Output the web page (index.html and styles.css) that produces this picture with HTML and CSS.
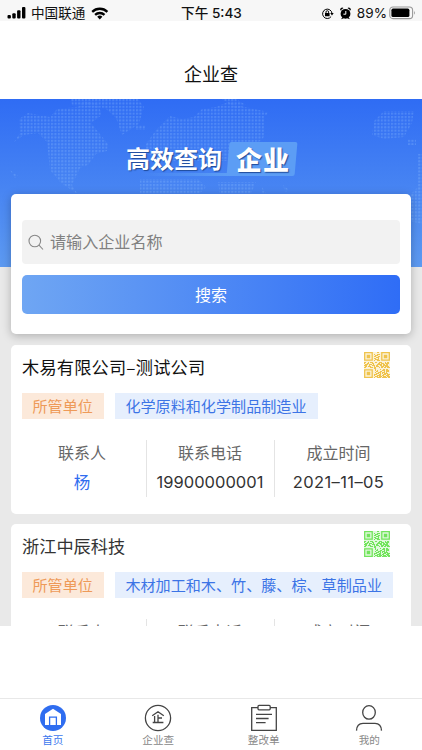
FILE: index.html
```
<!DOCTYPE html>
<html lang="zh-CN">
<head>
    <meta charset="UTF-8">
    <meta name="viewport" content="width=device-width, initial-scale=1">
    <title>企业查</title>
    <link rel="stylesheet" href="styles.css">
</head>
<body>
    <!-- 二维码图形，列表共用 -->
    <svg class="defs" width="0" height="0">
        <symbol id="qr" viewBox="0 0 26 26">
            <path fill="currentColor" opacity=".22" d="M0 0h26v26H0z"/>
            <path fill="none" stroke="currentColor" stroke-width="1.3" d="M.7 .7h7.5v7.5H.7zM17.8 .7h7.5v7.5h-7.5zM.7 17.8h7.5v7.5H.7z"/>
            <path fill="currentColor" d="M2.7 2.7h3.5v3.5H2.7zM19.8 2.7h3.5v3.5h-3.5zM2.7 19.8h3.5v3.5H2.7z"/>
            <path fill="none" stroke="currentColor" stroke-width="1" d="M13 .5h2M10 2.5h1m2 0h3M11 3.5h3M10 4.5h2m2 0h2M12 5.5h3M10 6.5h2m2 0h1M11 7.5h4M10 8.5h1m2 0h3M0 10.5h2m2 0h1m1 0h3m2 0h2m2 0h3m3 0h1m1 0h2M0 11.5h1m2 0h2m3 0h2m4 0h2m1 0h3m1 0h4M1 12.5h3m1 0h3m1 0h1m3 0h5m1 0h2m1 0h2M0 13.5h3m2 0h1m2 0h3m1 0h2m2 0h2m1 0h5M1 14.5h2m1 0h3m3 0h1m1 0h3m2 0h3m1 0h4M0 15.5h2m4 0h3m1 0h2m3 0h1m1 0h2m1 0h2m1 0h3M10 16.5h2M11 17.5h1m4 0h1m2 0h2m1 0h2M11 18.5h1m1 0h1m4 0h3m1 0h3M12 19.5h2m2 0h2m2 0h1m1 0h3M11 20.5h1m2 0h3m1 0h3m1 0h1M12 21.5h3m1 0h1m1 0h1m1 0h4M10 22.5h3m2 0h2m2 0h3m1 0h3M10 23.5h1m2 0h4m1 0h2m2 0h3M11 24.5h3m1 0h3m1 0h3m1 0h3M10 25.5h1m2 0h4m1 0h5m1 0h2"/>
        </symbol>
    </svg>

    <header class="status-bar">
        <div class="status-left">
            <svg width="20" height="14" viewBox="0 0 20 14">
                <rect x="0.5" y="9" width="3.4" height="3.5" rx="1"/>
                <rect x="5.3" y="7.2" width="3.4" height="5.3" rx="1"/>
                <rect x="10.1" y="4.3" width="3.4" height="8.2" rx="1"/>
                <rect x="15" y="1" width="3.4" height="11.5" rx="1"/>
            </svg>
            <span class="carrier">中国联通</span>
            <svg class="wifi" width="18" height="13" viewBox="0 0 18 13">
                <path fill="none" stroke="#000" stroke-width="2.3" d="M1.2 4.8a11 11 0 0 1 15.2 0M4.1 7.9a6.8 6.8 0 0 1 9.4 0"/>
                <path d="M8.8 12.4L6.2 9.8a3.7 3.7 0 0 1 5.2 0z"/>
            </svg>
        </div>
        <div class="status-time">下午 5:43</div>
        <div class="status-right">
            <svg width="13" height="13" viewBox="0 0 13 13">
                <path fill="none" stroke="#000" stroke-width="1" d="M10.1 9.6a4.7 4.7 0 1 1 .9-3.1"/>
                <path d="M9.2 6h3.5l-1.7 2.6zM4 6h4.6v3.3H4z"/>
                <path fill="none" stroke="#000" stroke-width=".9" d="M5 6.2V5a1.3 1.3 0 0 1 2.6 0v1.2"/>
            </svg>
            <svg class="alarm" width="11" height="13" viewBox="0 0 11 13">
                <circle cx="5.5" cy="6.8" r="4.9"/>
                <path d="M.4 3.4A2 2 0 0 1 3.5 1zM10.6 3.4A2 2 0 0 0 7.5 1zM1 12.2l1.4-2 1.5 1zM10 12.2l-1.4-2-1.5 1z"/>
                <path fill="none" stroke="#fff" stroke-width="1" d="M5.8 4v3.2H3.4"/>
            </svg>
            <span class="battery-text">89%</span>
            <svg width="27" height="14" viewBox="0 0 27 14">
                <rect x=".8" y="1" width="22.8" height="11.6" rx="3.2" fill="none" stroke="#999" stroke-width="1.1"/>
                <rect x="2.4" y="2.6" width="18" height="8.4" rx="1.6"/>
                <path fill="#999" d="M25 4.8q1.8 2 0 4z"/>
            </svg>
        </div>
    </header>

    <div class="nav-title">企业查</div>

    <main class="content">
        <section class="hero">
            <svg class="map" width="422" height="168" viewBox="0 0 422 168">
                <defs>
                    <pattern id="dots" width="3.4" height="3.4" patternUnits="userSpaceOnUse">
                        <rect width="2.1" height="2.1" rx=".5" fill="#8fc0ff"/>
                    </pattern>
                </defs>
                <g fill="url(#dots)">
                    <path d="M19 20L28 14 50 18 57 10 78 8 84 2 98 5 102 16 91 24 108 45 107 52 96 55 88 66 80 69 72 86 77 94 90 94 100 110 79 96 61 84 50 71 47 43 38 34 24 36 14 43 20 34z"/>
                    <path d="M71 0h67l6 8-5 17-17 11-6-17-11-10-33-2z"/>
                    <path d="M10 71l8 6-3 2zM136 26h9v5h-9z"/>
                    <path d="M146 45l10-14 14-14 12 3 12-2 8-8 14-2 12-5 12 4 24 5v26l-10 10-5 14H160l-14-8z"/>
                    <path d="M222 0h14l10 6-10 4zM262 14l6-1-2 4z"/>
                    <path d="M140 80h58l8 8-12 12h-54zM218 83h38l-6 14h-30zM262 88l5 8-4 3zM283 86l6 5-4 2z"/>
                    <path d="M384 12h30l-2 12-8 14-20 2-12-4 2-14zM408 40h8v6h-8z"/>
                    <path d="M418 55h4v70l-12-3-8-14 8-12 8-8z"/>
                </g>
            </svg>
            <div class="slogan">
                <span class="slogan-text">高效查询</span>
                <span class="slogan-tag"><b>企业</b></span>
            </div>
            <div class="slogan-line"></div>
        </section>

        <form class="search-card">
            <div class="search-input">
                <svg width="16" height="17" viewBox="0 0 16 17">
                    <circle cx="6.8" cy="7" r="5.8"/>
                    <path d="M11 11.2l4 4.3"/>
                </svg>
                <span>请输入企业名称</span>
            </div>
            <button type="button" class="search-btn">搜索</button>
        </form>

        <article class="company">
            <div class="company-head">
                <h2>木易有限公司–测试公司</h2>
                <svg class="qr qr-yellow"><use href="#qr"/></svg>
            </div>
            <div class="tags">
                <span class="tag tag-orange">所管单位</span>
                <span class="tag tag-blue">化学原料和化学制品制造业</span>
            </div>
            <dl class="info">
                <div><dt>联系人</dt><dd class="link">杨</dd></div>
                <div><dt>联系电话</dt><dd class="number">19900000001</dd></div>
                <div><dt>成立时间</dt><dd class="number date">2021–11–05</dd></div>
            </dl>
        </article>

        <article class="company">
            <div class="company-head">
                <h2 class="dim">浙江中辰科技</h2>
                <svg class="qr qr-green"><use href="#qr"/></svg>
            </div>
            <div class="tags">
                <span class="tag tag-orange">所管单位</span>
                <span class="tag tag-blue">木材加工和木、竹、藤、棕、草制品业</span>
            </div>
            <dl class="info">
                <div><dt>联系人</dt></div>
                <div><dt>联系电话</dt></div>
                <div><dt>成立时间</dt></div>
            </dl>
        </article>
    </main>

    <nav class="tab-bar">
        <a class="tab active">
            <svg width="28" height="28" viewBox="0 0 28 28">
                <circle cx="14" cy="14" r="13" fill="#2f6df0"/>
                <path fill="#fff" d="M14 4.8l8 5.3v11H6v-11z"/>
                <path fill="none" stroke="#2f6df0" stroke-width="1.3" d="M10.6 21.2v-8h6.8v8"/>
            </svg>
            <span>首页</span>
        </a>
        <a class="tab">
            <svg width="28" height="28" viewBox="0 0 28 28">
                <circle cx="14" cy="14" r="12.6"/>
                <path d="M8.2 11.8l5.8-4 5.8 4M10.6 12v6.5M14 10.8v7.7M14 14h4M8.7 18.5h10.7"/>
            </svg>
            <span>企业查</span>
        </a>
        <a class="tab">
            <svg width="28" height="28" viewBox="0 0 28 28">
                <path d="M8 3.6H1.7v22.8h24.6V3.6H20"/>
                <rect x="8" y="1.4" width="12.2" height="4.4" rx="1"/>
                <path d="M6 10.3h16M6 14.5h12.6M6 18.6h9.6"/>
            </svg>
            <span>整改单</span>
        </a>
        <a class="tab">
            <svg width="28" height="28" viewBox="0 0 28 28">
                <ellipse cx="14" cy="8.4" rx="6.3" ry="6.8"/>
                <path d="M1.5 26.6c.2-4.6 2.6-7.2 6.5-7.2h12c3.9 0 6.3 2.6 6.5 7.2"/>
            </svg>
            <span>我的</span>
        </a>
    </nav>
</body>
</html>
```
FILE: styles.css
```
* {
    margin: 0;
    padding: 0;
    box-sizing: border-box;
}

body {
    width: 422px;
    height: 750px;
    display: flex;
    flex-direction: column;
    overflow: hidden;
    background: #fff;
    font-family: "Noto Sans CJK SC", sans-serif;
    font-weight: 400;
    color: #222;
}

svg {
    display: block;
    flex-shrink: 0;
}

.defs {
    position: absolute;
}

/* 状态栏 */
.status-bar {
    height: 21px;
    flex-shrink: 0;
    display: grid;
    grid-template-columns: 1fr auto 1fr;
    align-items: center;
    padding: 3px 6px 0 7px;
    background: #f7f7f7;
    color: #111;
    font-size: 13.6px;
    line-height: 18px;
}

.status-left,
.status-right {
    display: flex;
    align-items: center;
}

.carrier {
    margin-left: 4px;
    padding-bottom: 2px;
}

.wifi {
    margin-left: 6px;
}

.status-time {
    font-family: Inter, "Noto Sans CJK SC", sans-serif;
    font-weight: 500;
    font-size: 13.6px;
}

.status-right {
    justify-content: flex-end;
}

.alarm {
    margin: 0 6px;
}

.battery-text {
    font-family: Inter, sans-serif;
    font-size: 13.6px;
    margin-right: 2px;
}

.nav-title {
    height: 78px;
    flex-shrink: 0;
    padding-top: 39px;
    text-align: center;
    font-size: 18px;
    line-height: 26px;
    color: #111;
}

.content {
    height: 527px;
    flex-shrink: 0;
    overflow: hidden;
    background: #e9e9e9;
}

/* 顶部横幅 */
.hero {
    position: relative;
    height: 168px;
    padding-top: 42px;
    background: linear-gradient(#2f6cf4, #5d9af1);
}

.map {
    position: absolute;
    left: 0;
    top: 0;
    opacity: .3;
}

.slogan {
    position: relative;
    display: flex;
    align-items: center;
    padding-left: 126px;
    height: 35px;
    color: #fff;
    font-size: 24px;
    font-weight: 700;
    line-height: 34px;
    text-shadow: 1px 1px 1px #204b9a;
}

.slogan-text {
    padding-bottom: 1px;
}

.slogan-tag {
    margin-left: 6px;
    padding: 0 6px 1px 8px;
    border-radius: 2px;
    background: #5c9df5;
    transform: skewX(-5deg);
}

.slogan-tag b {
    display: block;
    font-size: 26px;
    line-height: 33px;
    letter-spacing: 1px;
    transform: skewX(5deg);
}

.slogan-line {
    width: 88px;
    height: 3px;
    margin: -3px 0 0 140px;
    background: linear-gradient(to right, transparent, #5c9df5);
}

/* 搜索 */
.search-card {
    position: relative;
    height: 140px;
    margin: -73px 11px 11px;
    padding: 26px 11px 0;
    border-radius: 5px;
    background: #fff;
    box-shadow: 0 2px 10px rgba(0, 0, 0, .25);
}

.search-input {
    display: flex;
    align-items: center;
    gap: 6px;
    height: 44px;
    padding-left: 6px;
    border-radius: 4px;
    background: #f2f2f2;
    color: #808080;
    font-size: 16.1px;
}

.search-input span {
    padding-bottom: 2px;
}

.search-input svg {
    fill: none;
    stroke: #888;
    stroke-width: 1.1;
}

.search-btn {
    display: block;
    width: 100%;
    height: 39px;
    margin-top: 11px;
    padding-bottom: 2px;
    border: none;
    border-radius: 5px;
    background: linear-gradient(to right, #6fa6f3, #2f6df6);
    color: #fff;
    font-family: inherit;
    font-size: 16px;
}

/* 企业列表 */
.company {
    height: 169px;
    margin: 0 11px 10px;
    border-radius: 5px;
    background: #fff;
}

.company-head {
    display: flex;
    justify-content: space-between;
    height: 48px;
    padding: 7px 21px 0 11px;
}

.company-head h2 {
    font-size: 17.2px;
    font-weight: 400;
    line-height: 30px;
    letter-spacing: .2px;
    color: #111;
}

.company-head .dim {
    letter-spacing: 0;
    color: #333;
}

.qr {
    width: 26px;
    height: 26px;
}

.qr-yellow {
    color: #efc34c;
}

.qr-green {
    color: #72e45c;
}

.tags {
    display: flex;
    gap: 11px;
    padding-left: 11px;
}

.tag {
    height: 26px;
    padding: 0 11px 0 10.5px;
    font-size: 15.1px;
    line-height: 25px;
    white-space: nowrap;
}

.tag-orange {
    background: #fce9da;
    color: #ee9a58;
}

.tag-blue {
    background: #e6effd;
    color: #3c74e6;
}

.info {
    display: grid;
    grid-template-columns: repeat(3, 128px);
    padding: 21px 0 0 8px;
    text-align: center;
}

.info div {
    height: 57px;
    padding-right: 1px;
    border-right: 1px solid #e4e4e4;
}

.info div:last-child {
    border-right: none;
}

.info dt {
    font-size: 16px;
    line-height: 25px;
    color: #666;
}

.info dd {
    padding-top: 5px;
    font-size: 16.5px;
    line-height: 25px;
    color: #333;
}

.info .link {
    color: #2f6df0;
}

.info .number {
    font-family: Inter, sans-serif;
    font-size: 16.5px;
    white-space: nowrap;
}

.info .date {
    letter-spacing: .4px;
}

/* 底部导航 */
.tab-bar {
    display: grid;
    grid-template-columns: repeat(4, 1fr);
    height: 52px;
    margin-top: auto;
    border-top: 1px solid #e8e8e8;
}

.tab {
    display: flex;
    flex-direction: column;
    align-items: center;
    padding-top: 5px;
    font-size: 10.6px;
    line-height: 16px;
    color: #888;
}

.tab svg {
    fill: none;
    stroke: #444;
    stroke-width: 1.3;
}

.tab.active {
    color: #3d78ee;
}

.tab.active svg {
    stroke: none;
}
```
